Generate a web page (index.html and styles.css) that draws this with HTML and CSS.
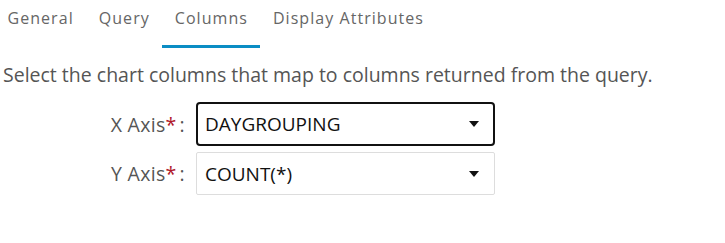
FILE: index.html
```html
<!DOCTYPE html>
<html lang="en">

<head>
  <meta charset="UTF-8">
  <meta name="viewport" content="width=device-width, initial-scale=1.0">
  <title>Chart Columns</title>
  <link rel="stylesheet" href="styles.css">
</head>

<body>
  <ul class="tabs">
    <li class="tab">General</li>
    <li class="tab">Query</li>
    <li class="tab active">Columns</li>
    <li class="tab">Display Attributes</li>
  </ul>

  <p class="intro">Select the chart columns that map to columns returned from the query.</p>

  <div class="field-row">
    <label class="field-label" for="xAxis">X Axis<span class="req">*</span>:</label>
    <div class="select-box focused" id="xAxis">
      <span class="select-value">DAYGROUPING</span>
      <span class="caret"></span>
    </div>
  </div>

  <div class="field-row">
    <label class="field-label" for="yAxis">Y Axis<span class="req">*</span>:</label>
    <div class="select-box" id="yAxis">
      <span class="select-value">COUNT(*)</span>
      <span class="caret"></span>
    </div>
  </div>
</body>

</html>
```

FILE: styles.css
```css
* {
  box-sizing: border-box;
  margin: 0;
  padding: 0;
  font-family: 'Open Sans', sans-serif;
}

body {
  background: #fff;
  color: #555;
}

.tabs {
  list-style: none;
  display: flex;
  margin-left: -5px;
  height: 48px;
}

.tab {
  padding: 7px 12.5px 0;
  font-size: 16px;
  letter-spacing: 1.05px;
  color: #666;
  border-bottom: 3px solid transparent;
}

.tab.active {
  border-bottom-color: #0b8dc4;
}

.intro {
  margin: 13px 0 0 3px;
  font-size: 19.5px;
  color: #555;
}

.field-row {
  display: flex;
  align-items: center;
  margin-top: 6px;
}

.intro + .field-row {
  margin-top: 14px;
}

.field-label {
  width: 190px;
  text-align: right;
  padding-right: 5px;
  font-size: 19.5px;
  letter-spacing: 0.3px;
  color: #555;
}

.req {
  color: #b0172a;
  margin-right: 3px;
}

.select-box {
  width: 299px;
  height: 43px;
  margin-left: 6px;
  border: 1px solid #ddd;
  border-radius: 2px;
  display: flex;
  align-items: center;
  justify-content: space-between;
  padding: 0 15px 0 8px;
  color: #111;
  font-size: 19px;
}

.select-box.focused {
  border: 2px solid #111;
  border-radius: 4px;
  height: 44px;
  padding-left: 7px;
  padding-right: 14px;
}

.caret {
  width: 0;
  height: 0;
  border-left: 5.5px solid transparent;
  border-right: 5.5px solid transparent;
  border-top: 6px solid #111;
}
```
